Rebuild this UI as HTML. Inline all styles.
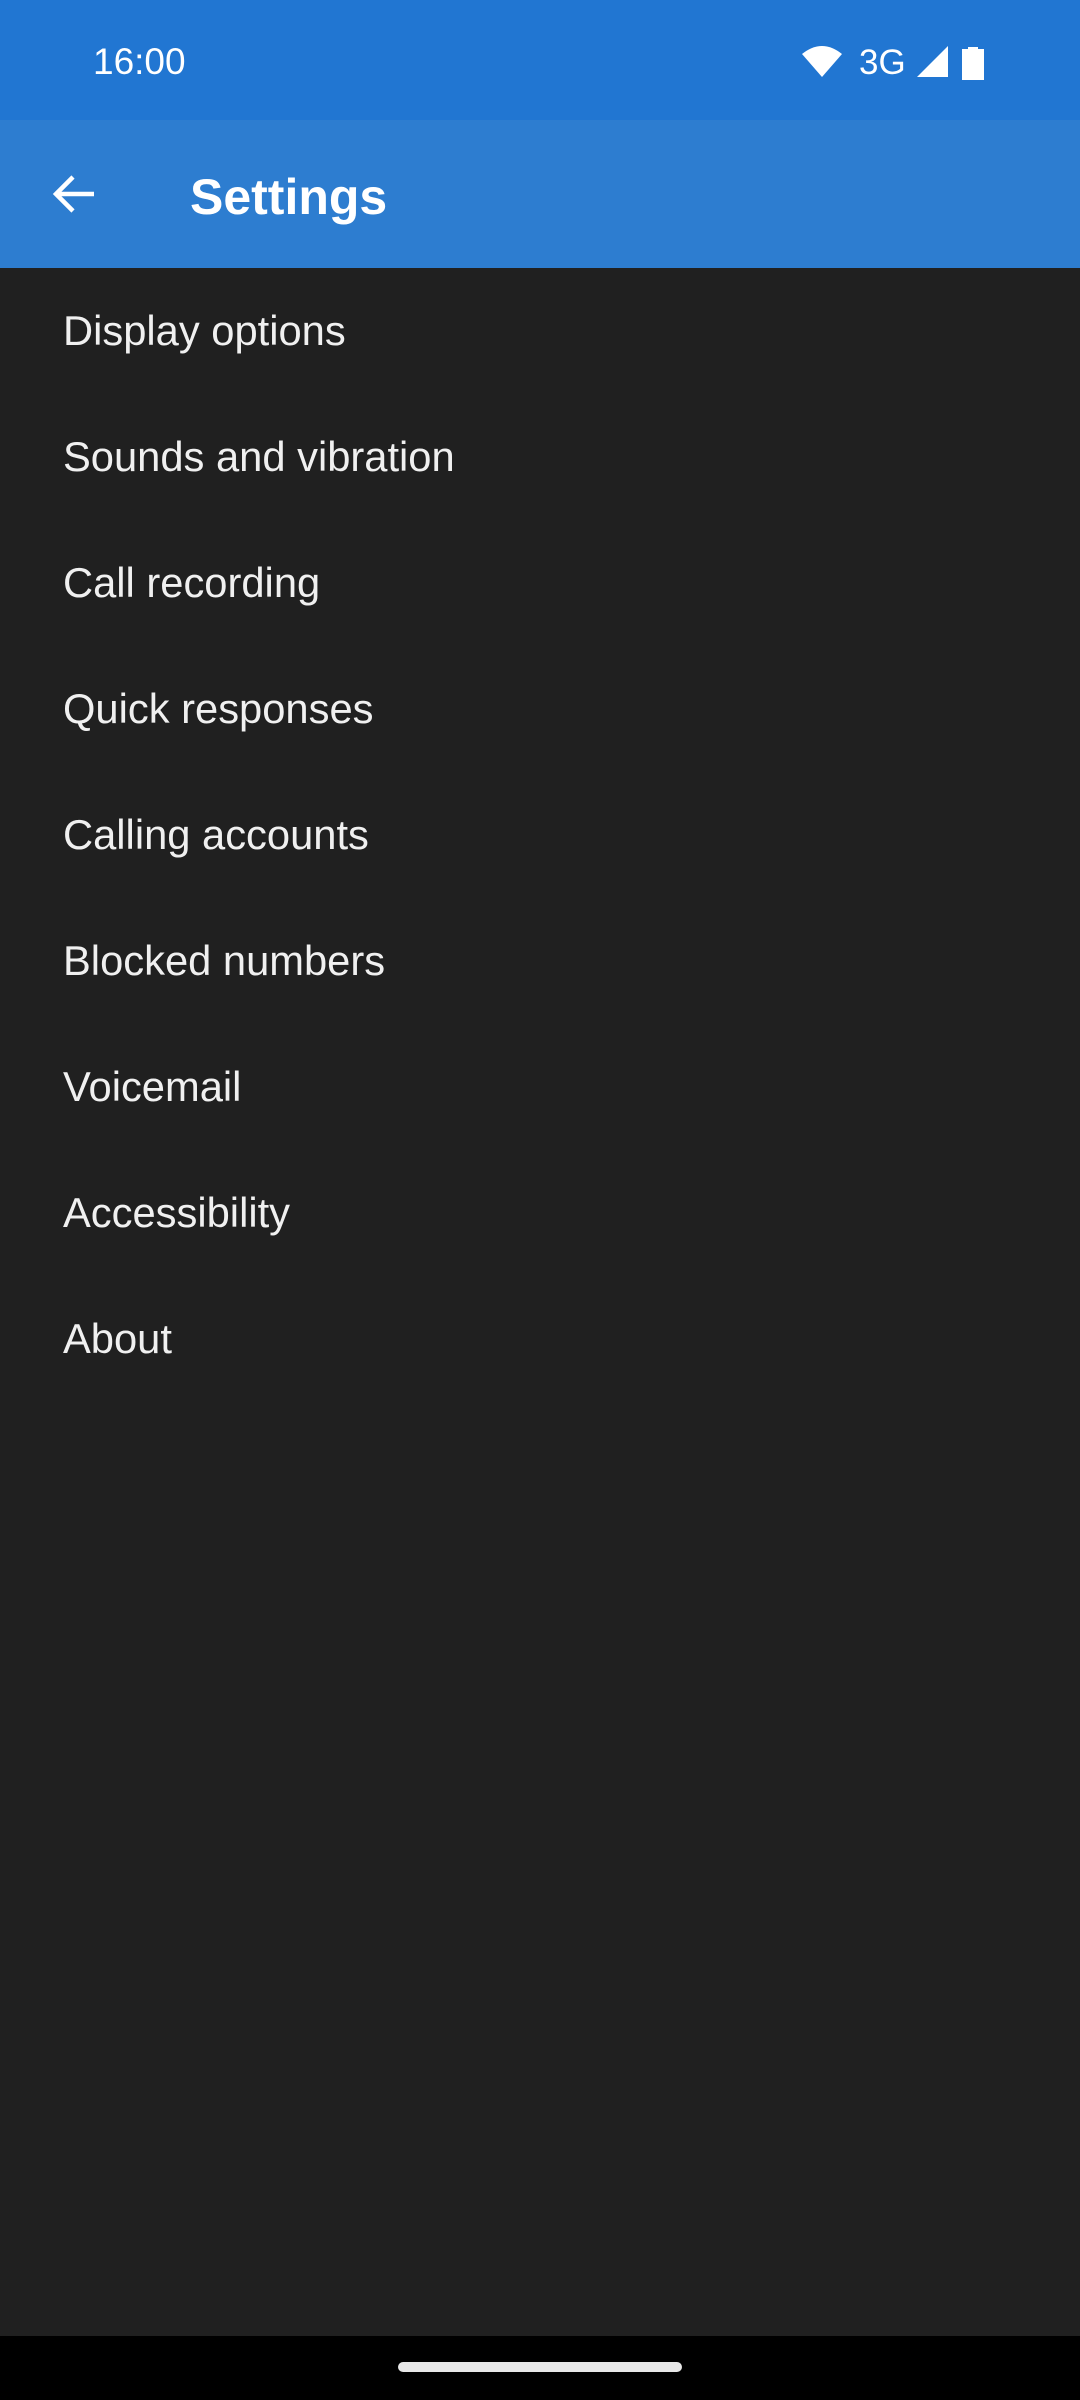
<!DOCTYPE html>
<html><head><meta charset="utf-8"><style>
body{margin:0;width:1080px;height:2400px;background:#202020;position:relative;overflow:hidden;font-family:"Liberation Sans",Roboto,sans-serif;}
.sb{position:absolute;left:0;top:0;width:1080px;height:120px;background:#2176d2;}
.ab{position:absolute;left:0;top:120px;width:1080px;height:148px;background:#2d7dd0;}
.t{position:absolute;color:#fff;white-space:nowrap;}
.item{position:absolute;left:63px;color:#f0f0f0;font-size:41.7px;line-height:1;}
.nav{position:absolute;left:0;top:2336px;width:1080px;height:64px;background:#000;}
.h{position:absolute;left:398px;top:2362px;width:284px;height:10px;border-radius:5px;background:#e8e8e8;}
</style></head><body>
<div class="sb"></div>
<div class="t" style="left:93px;top:41px;font-size:37px;">16:00</div>
<svg style="position:absolute;left:800px;top:44px" width="190" height="36" viewBox="0 0 190 36">
<path d="M2 10 Q22 -6 42 10 L22 33 Z" fill="#fff"/>
<text x="59" y="30" fill="#fff" font-size="35" font-family="Liberation Sans">3G</text>
<path d="M117 33 L148 2 L148 33 Z" fill="#fff"/>
<path d="M171 3 h10 v2 h6 v31 h-22 v-31 h6 z" fill="#fff" transform="translate(-3,0)"/>
</svg>
<div class="ab"></div>
<svg style="position:absolute;left:52px;top:173px" width="44" height="42" viewBox="0 0 44 42">
<path d="M42 21 H5 M21 4 L4 21 L21 38" stroke="#fff" stroke-width="4.5" fill="none"/>
</svg>
<div class="t" style="left:190px;top:168px;font-size:50px;font-weight:bold;">Settings</div>
<div class="item" style="top:310px">Display options</div>
<div class="item" style="top:436px">Sounds and vibration</div>
<div class="item" style="top:562px">Call recording</div>
<div class="item" style="top:688px">Quick responses</div>
<div class="item" style="top:814px">Calling accounts</div>
<div class="item" style="top:940px">Blocked numbers</div>
<div class="item" style="top:1066px">Voicemail</div>
<div class="item" style="top:1192px">Accessibility</div>
<div class="item" style="top:1318px">About</div>
<div class="nav"></div><div class="h"></div>
</body></html>
